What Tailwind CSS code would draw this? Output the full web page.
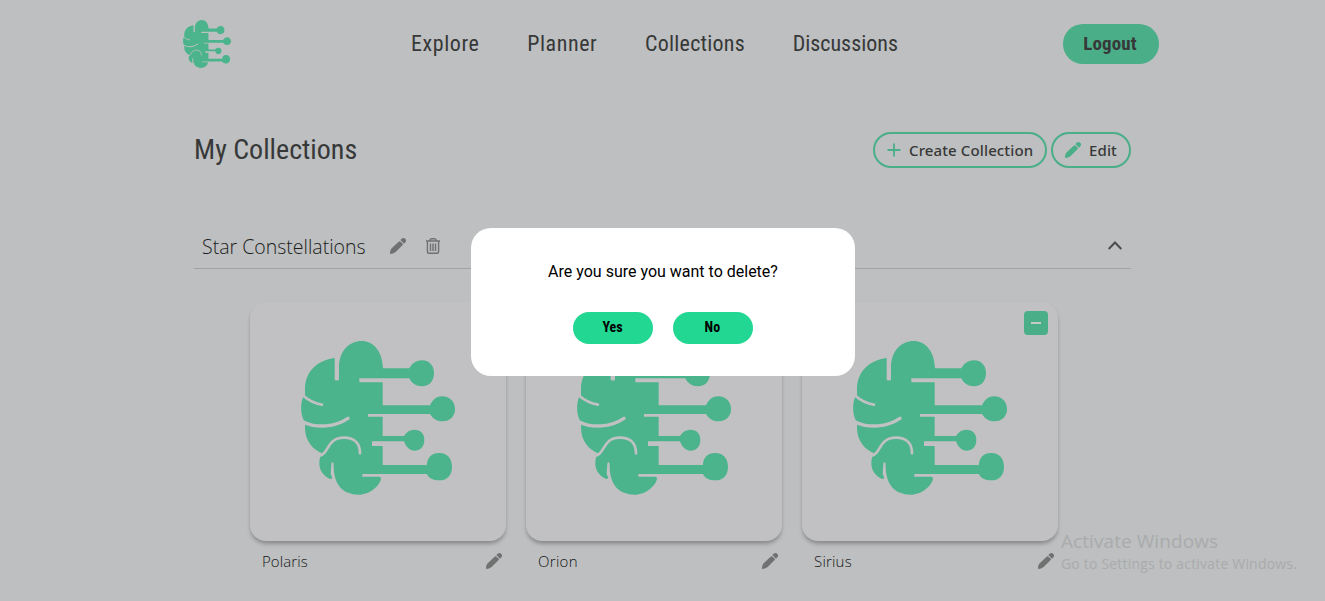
<!DOCTYPE html>
<html lang="en">
<head>
<meta charset="utf-8">
<title>My Collections</title>
<script src="https://cdn.jsdelivr.net/npm/@tailwindcss/browser@4"></script>
</head>
<body class="h-[601px] overflow-hidden bg-[#bdbfc0] font-['Open_Sans',sans-serif] text-[#373838]">
<svg class="hidden">
  <symbol id="brain" viewBox="33 32 462 462">
    <path fill="#4bb48c" d="M134 83C80 90 44 125 45 180L45 200L39 201C31 222 31 250 42 272L46 280C40 325 65 358 101 371L91 378C83 405 90 432 120 446L127 444L122 430L124 400Q127 392 131 400C129 465 160 493 205 493C240 493 270 465 273 445Q273 439 268 439H217V431H411C416 444 430 450 448 450C472 450 486 434 486 409C486 384 472 368 448 368C425 368 411 382 411 404H278V347H246V333H342C347 348 358 361 373 361C390 361 403 350 403 328C403 310 392 298 373 298C360 298 350 304 342 317H278V259H234V251H420C428 264 440 273 457 273C480 273 495 258 495 236C495 215 480 198 457 198C440 198 428 208 420 225H278V156H208V144H358C364 158 378 168 396 168C418 168 432 152 432 129C432 108 420 90 396 90C380 90 366 98 358 114H279C277 62 250 32 214 32C180 32 147 60 147 112V148Q140 153 134 148Z"/>
    <g fill="none" stroke="currentColor" stroke-width="8" stroke-linecap="round">
      <path d="M38 195C55 210 75 220 96 223"/>
      <path stroke-width="10" d="M38 274C80 295 135 290 174 264"/>
      <path d="M89 376C118 372 108 322 162 322C197 322 210 343 210 369"/>
    </g>
  </symbol>
  <symbol id="pencil" viewBox="0 0 48 48">
    <path fill="currentColor" d="M0 48C0 40 2 34 5 31L26 11Q29 8 32 11L38 17Q40 19 38 21L17 42C12 46 6 48 0 48ZM31 6L35 2C39-1 44 0 46 3C49 6 49 10 46 13L42 17Z"/>
  </symbol>
</svg>

<header class="flex h-[88px] items-center pl-[183px]">
  <svg class="h-12 w-12 text-[#bdbfc0]"><use href="#brain"/></svg>
  <nav class="ml-[180px] flex w-[487px] justify-between font-[Roboto] text-[22px] leading-8 font-stretch-75%">
    <a class="tracking-[0.58px]">Explore</a>
    <a class="tracking-[0.58px]">Planner</a>
    <a class="tracking-[0.22px]">Collections</a>
    <a>Discussions</a>
  </nav>
  <button class="ml-[165px] h-10 w-24 rounded-full bg-[#4aae88] pr-0.5 font-[Roboto] text-[19px] font-bold tracking-[0.1px] font-stretch-75%">Logout</button>
</header>

<main class="ml-[194px] w-[937px]">
  <div class="mt-11 flex h-9 items-center">
    <h1 class="font-[Roboto] text-[28px] leading-9 font-stretch-75%">My Collections</h1>
    <div class="ml-auto flex gap-1 font-['Noto_Sans'] text-[15px] font-medium">
      <button class="flex h-9 w-[174px] items-center rounded-full border-2 border-[#4aae88] pl-3 tracking-[0.12px]">
        <svg class="mr-2 h-[14px] w-[14px] text-[#4aae88]" viewBox="0 0 14 14" fill="none" stroke="currentColor" stroke-width="1.8"><path d="M7 .5v13M.5 7h13"/></svg>Create Collection
      </button>
      <button class="flex h-9 w-20 items-center rounded-full border-2 border-[#4aae88] pl-3 tracking-[0.12px]">
        <svg class="mr-2 h-4 w-4 text-[#4aae88]"><use href="#pencil"/></svg>Edit
      </button>
    </div>
  </div>

  <section>
    <div class="mt-[58px] flex h-[43px] items-center border-b border-[#a0a2a3] pl-2 text-[20px]">
      <h2 class="w-[188px] text-[19.5px] font-light text-[#1c1d1d]">Star Constellations</h2>
      <svg class="mb-[2px] h-4 w-4 text-[#707171]"><use href="#pencil"/></svg>
      <svg class="mb-[2px] ml-5 h-4 w-[14px] text-[#707171]" viewBox="0 0 14 16" fill="none" stroke="currentColor" stroke-width="1.4"><path d="M0 3h14M1.400 3v10.500Q1.400 15.300 3 15.300h8q1.600 0 1.600-1.800V3M3.800 2.600Q4 .7 5.500.7h3Q10 .7 10.200 2.600M4.500 5.500v7.500M7 5.500v7.500M9.500 5.500v7.500"/></svg>
      <svg class="mr-[9px] mb-1 ml-auto h-[9px] w-[14px]" viewBox="0 0 14 9" fill="none" stroke="#4b4c4c" stroke-width="2"><path d="M.7 8L7 1.500L13.300 8"/></svg>
    </div>

    <div class="mt-[33px] ml-14 flex gap-5 text-[15px]">
      <article class="w-64">
        <div class="flex h-[239px] justify-center rounded-2xl bg-[#c1c1c3] pt-[39px] shadow-[0_4px_4px_-1px_rgba(0,0,0,0.22),0_2px_4px_-1px_rgba(0,0,0,0.12)]">
          <svg class="h-[154px] w-[154px] text-[#c1c1c3]"><use href="#brain"/></svg>
        </div>
        <div class="flex h-10 items-center justify-between pr-1 pl-3"><span class="font-light tracking-[0.1px] text-[#141515]">Polaris</span><svg class="h-4 w-4 text-[#707171]"><use href="#pencil"/></svg></div>
      </article>
      <article class="w-64">
        <div class="flex h-[239px] justify-center rounded-2xl bg-[#c1c1c3] pt-[39px] shadow-[0_4px_4px_-1px_rgba(0,0,0,0.22),0_2px_4px_-1px_rgba(0,0,0,0.12)]">
          <svg class="h-[154px] w-[154px] text-[#c1c1c3]"><use href="#brain"/></svg>
        </div>
        <div class="flex h-10 items-center justify-between pr-1 pl-3"><span class="font-light tracking-[0.3px] text-[#141515]">Orion</span><svg class="h-4 w-4 text-[#707171]"><use href="#pencil"/></svg></div>
      </article>
      <article class="w-64">
        <div class="relative flex h-[239px] justify-center rounded-2xl bg-[#c1c1c3] pt-[39px] shadow-[0_4px_4px_-1px_rgba(0,0,0,0.22),0_2px_4px_-1px_rgba(0,0,0,0.12)]">
          <svg class="h-[154px] w-[154px] text-[#c1c1c3]"><use href="#brain"/></svg>
          <button class="absolute top-[9px] right-[10px] flex h-6 w-6 items-center justify-center rounded bg-[#4aae88]"><span class="h-[2px] w-[10px] bg-[#c5cac8]"></span></button>
        </div>
        <div class="flex h-10 items-center justify-between pr-1 pl-3"><span class="font-light tracking-[0.2px] text-[#141515]">Sirius</span><svg class="h-4 w-4 text-[#707171]"><use href="#pencil"/></svg></div>
      </article>
    </div>
  </section>
</main>

<div class="absolute top-[228px] left-[471px] h-[148px] w-96 rounded-[20px] bg-white pt-8 text-center font-[Roboto] text-black">
  <p class="text-base leading-6">Are you sure you want to delete?</p>
  <div class="mt-7 flex justify-center gap-5 text-[14px] font-bold font-stretch-75%">
    <button class="h-8 w-20 rounded-full bg-[#21d791] pr-px pb-0.5">Yes</button>
    <button class="h-8 w-20 rounded-full bg-[#21d791] pr-px pb-0.5 tracking-[0.3px]">No</button>
  </div>
</div>

<div class="absolute top-[529px] left-[1061px] whitespace-nowrap text-[#a9abac]">
  <p class="text-[19px] leading-6 tracking-[0.07px]">Activate Windows</p>
  <p class="text-[14px] leading-[22px] tracking-[0.19px]">Go to Settings to activate Windows.</p>
</div>
</body>
</html>
